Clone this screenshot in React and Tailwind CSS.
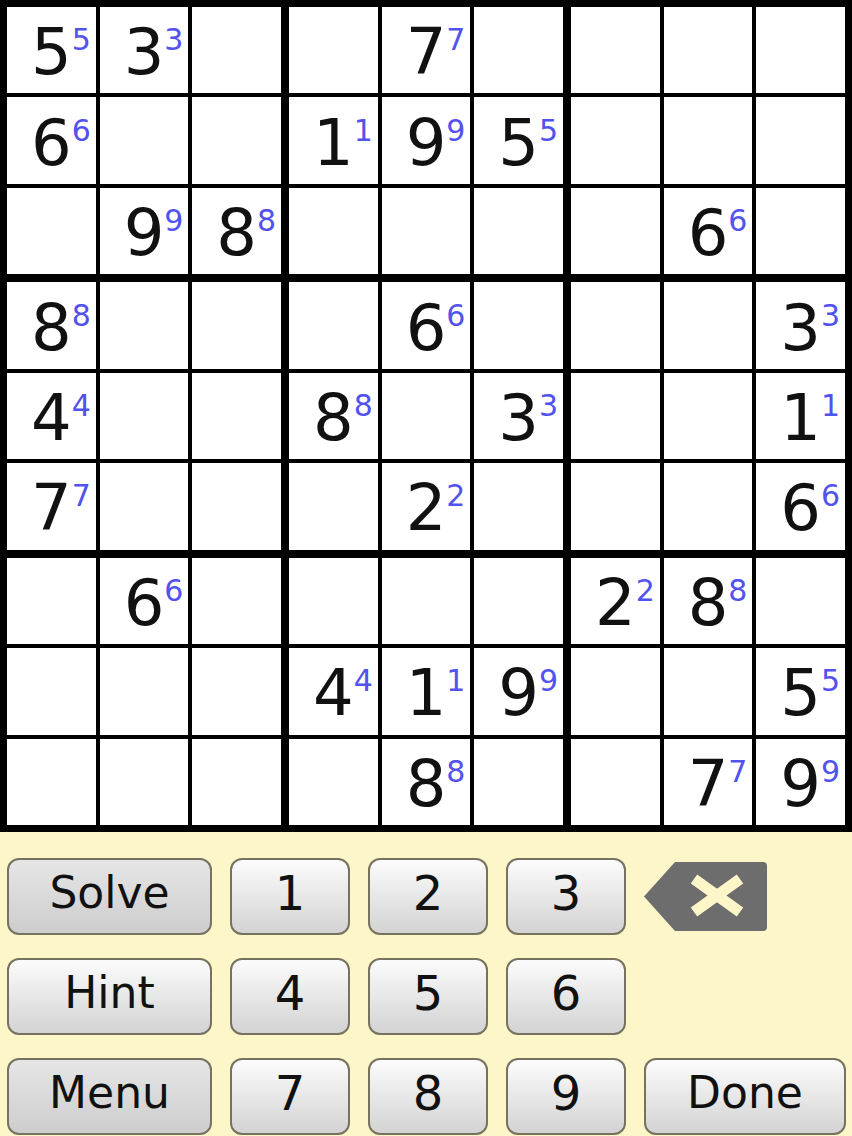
import React from 'react';

const puzzle = [
  [5, 3, 0, 0, 7, 0, 0, 0, 0],
  [6, 0, 0, 1, 9, 5, 0, 0, 0],
  [0, 9, 8, 0, 0, 0, 0, 6, 0],
  [8, 0, 0, 0, 6, 0, 0, 0, 3],
  [4, 0, 0, 8, 0, 3, 0, 0, 1],
  [7, 0, 0, 0, 2, 0, 0, 0, 6],
  [0, 6, 0, 0, 0, 0, 2, 8, 0],
  [0, 0, 0, 4, 1, 9, 0, 0, 5],
  [0, 0, 0, 0, 8, 0, 0, 7, 9],
];

const Cell = ({ value }) => (
  <div className="flex items-center justify-center bg-white pt-1">
    {value > 0 && (
      <span className="relative text-[64px] leading-none text-[#111]">
        {value}
        <span className="absolute left-full top-[5px] text-[30px] leading-none text-[#5252ee]">
          {value}
        </span>
      </span>
    )}
  </div>
);

const Box = ({ br, bc }) => (
  <div className="grid grid-cols-3 grid-rows-3 gap-[4px] bg-black">
    {[0, 1, 2].map((r) =>
      [0, 1, 2].map((c) => (
        <Cell key={`${r}-${c}`} value={puzzle[br * 3 + r][bc * 3 + c]} />
      ))
    )}
  </div>
);

const KeyButton = ({ label, gray, digit }) => (
  <button
    className={`flex items-center justify-center h-[77px] rounded-[12px] border-2 border-[#77725f] pb-2 leading-none text-[#111] bg-linear-to-b ${
      gray ? 'from-[#e6e6e6] to-[#cdcdcd]' : 'from-[#fcfcfc] to-[#d3d3d3]'
    } ${digit ? 'text-[48px]' : 'text-[44px]'}`}
  >
    {label}
  </button>
);

const Backspace = () => (
  <div className="self-center justify-self-start">
    <svg width="123" height="69" viewBox="0 0 123 69">
      <path d="M0 34.5 L31 0 H119 Q123 0 123 4 V65 Q123 69 119 69 H31 Z" fill="#6d6d6d" />
      <line x1="50" y1="17" x2="96" y2="50" stroke="#fdf6c9" strokeWidth="11" />
      <line x1="96" y1="17" x2="50" y2="50" stroke="#fdf6c9" strokeWidth="11" />
    </svg>
  </div>
);

export default function App() {
  return (
    <div className="w-[852px] h-[1136px] overflow-hidden bg-[#fdf6c9] font-['DejaVu_Sans',sans-serif]">
      {/* Board */}
      <div className="h-[832px] bg-black p-[7px]">
        <div className="grid h-full grid-cols-3 grid-rows-3 gap-[8px]">
          {[0, 1, 2].map((br) =>
            [0, 1, 2].map((bc) => <Box key={`${br}-${bc}`} br={br} bc={bc} />)
          )}
        </div>
      </div>

      {/* Keypad */}
      <div className="grid grid-cols-[205px_120px_120px_120px_202px] grid-rows-[77px_77px_77px] gap-x-[18px] gap-y-[23px] pl-[7px] pt-[26px]">
        <KeyButton label="Solve" gray />
        <KeyButton label="1" digit />
        <KeyButton label="2" digit />
        <KeyButton label="3" digit />
        <Backspace />

        <KeyButton label="Hint" />
        <KeyButton label="4" digit />
        <KeyButton label="5" digit />
        <KeyButton label="6" digit />
        <div />

        <KeyButton label="Menu" gray />
        <KeyButton label="7" digit />
        <KeyButton label="8" digit />
        <KeyButton label="9" digit />
        <KeyButton label="Done" />
      </div>
    </div>
  );
}
